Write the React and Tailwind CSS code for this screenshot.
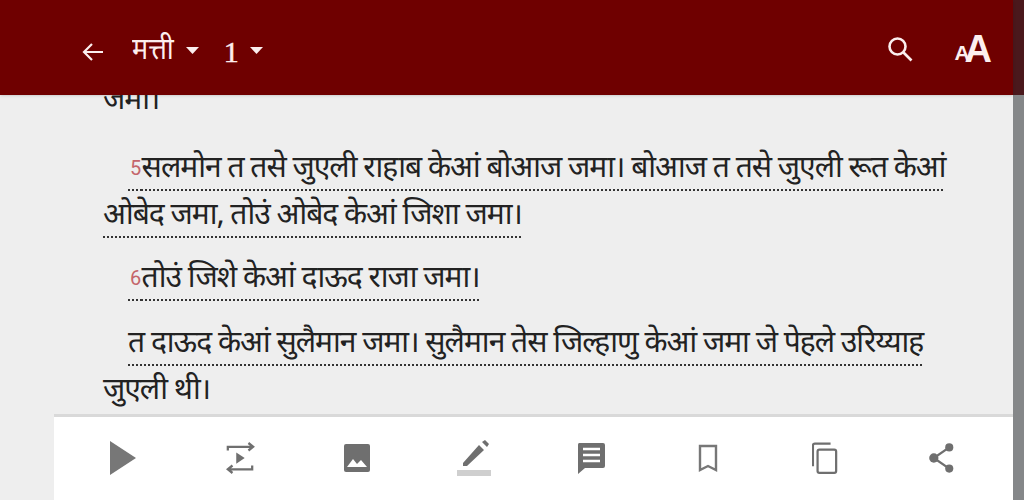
import React from "react";

const font = "font-['Noto_Sans_Devanagari','Lohit_Devanagari','FreeSans','Noto_Sans','Liberation_Sans',sans-serif]";
const U = ({ children }) => (
  <span className="underline decoration-dotted decoration-[#333] decoration-[1.5px] underline-offset-[12px]">{children}</span>
);
const Num = ({ children }) => (
  <span className="relative">
    <span className="absolute left-[2px] top-[6px] text-[20px] leading-[24px] indent-0 tracking-normal text-[#c4656b] font-['Roboto',sans-serif]">{children}</span>
    {"\u00a0\u00a0"}
  </span>
);
const Cell = ({ children }) => <div className="w-[117px] flex justify-center">{children}</div>;

export default function App() {
  return (
    <div className="w-[1024px] h-[500px] flex overflow-hidden bg-[#eeeeee]">
      <div className="w-[1013px] h-full flex flex-col">
        <header className="h-[95px] shrink-0 bg-[#6f0000] flex items-center pt-[8px] pl-[81px] pr-[21px] text-[#fdeeee] shadow z-10">
          <svg width="24" height="24" viewBox="0 0 24 24" fill="none" stroke="#fbeeee" strokeWidth="2.2"><path d="M22 12H3M11 4l-8 8 8 8" /></svg>
          <span className={`${font} text-[27px] ml-[27px] leading-none scale-y-110`}>मत्ती</span>
          <svg width="14" height="8" viewBox="0 0 14 8" className="ml-[12px] -mt-[2px]" fill="#fbeeee"><path d="M0 0h13L6.5 7z" /></svg>
          <span className="font-['Liberation_Serif',serif] text-[30px] ml-[24px] leading-none [-webkit-text-stroke:0.5px_#fdeeee]">1</span>
          <svg width="14" height="8" viewBox="0 0 14 8" className="ml-[11px] -mt-[2px]" fill="#fbeeee"><path d="M0 0h13L6.5 7z" /></svg>
          <div className="flex-1" />
          <svg width="26" height="26" viewBox="0 0 26 26" fill="none" stroke="#fbeeee" strokeWidth="2.6" className="mr-[41px] -mt-[5px]"><circle cx="10.5" cy="10.5" r="8" /><path d="M16.5 16.5l8 8" /></svg>
          <span className="font-['Liberation_Sans',sans-serif] font-bold leading-none flex items-end -mt-[6px]">
            <span className="text-[21px] -mr-[5px] leading-[22px]">A</span><span className="text-[38px] leading-[30px]">A</span>
          </span>
        </header>
        <main className={`${font} flex-1 min-h-0 overflow-hidden pl-[103px] pr-[66px] text-[30px] tracking-[-1px] leading-[47px] text-[#222]`}>
          <div className="-mt-[17px]">
            <p>जमा।</p>
            <p className="mt-[21px] indent-[25px]"><U><Num>5</Num>सलमोन त तसे जुएली राहाब केआं बोआज जमा। बोआज त तसे जुएली रूत केआं ओबेद जमा, तोउं ओबेद केआं जिशा जमा।</U></p>
            <p className="mt-[16px] indent-[25px]"><U><Num>6</Num>तोउं जिशे केआं दाऊद राजा जमा।</U></p>
            <p className="mt-[18px] indent-[25px]"><U>त दाऊद केआं सुलैमान जमा। सुलैमान तेस जिल्हाणु केआं जमा जे पेहले उरिय्याह</U> जुएली थी।</p>
          </div>
        </main>
        <div className="ml-[54px] h-[86px] shrink-0 bg-white border-t-[3px] border-[#d9d9d9] flex items-center pl-[10px] pb-[2px]">
          <Cell><svg width="30" height="34" viewBox="0 0 30 34" fill="#777"><path d="M2 0l26 17L2 34z" /></svg></Cell>
          <Cell>
            <svg width="30" height="36" viewBox="0 0 32 36" fill="none" stroke="#6f6f6f" strokeWidth="2.4"><path d="M3 10V6h26M25 2l5 4-5 4M29 26v4H4M8 26l-5 4 5 4" /><path d="M12 12l9 6-9 6z" fill="#6f6f6f" stroke="none" /></svg>
          </Cell>
          <Cell><svg width="26" height="30" viewBox="0 0 26 30" className="ml-[1px]"><rect width="26" height="28" y="1" rx="2" fill="#6f6f6f" /><path d="M3 24l6-8 4 5 4-4 6 7z" fill="#fff" /></svg></Cell>
          <Cell>
            <svg width="34" height="40" viewBox="0 0 34 40"><path d="M6 25L22 7l5 5L10 28H6zM25 4l3-2 4 4-2 3z" fill="#6f6f6f" /><rect y="32" width="34" height="6" fill="#cfcfcf" /></svg>
          </Cell>
          <Cell>
            <svg width="28" height="32" viewBox="0 0 28 32"><path d="M2 1h24a2 2 0 0 1 2 2v21a2 2 0 0 1-2 2H8l-7 6V3a2 2 0 0 1 1-2z" fill="#6f6f6f" /><path d="M6 7h17M6 13h17M6 19h17" stroke="#fff" strokeWidth="2.4" /></svg>
          </Cell>
          <Cell>
            <svg width="20" height="28" viewBox="0 0 20 28" fill="none" stroke="#777" strokeWidth="2.4"><path d="M2 2h16v24l-8-4-8 4z" /></svg>
          </Cell>
          <Cell>
            <svg width="26" height="34" viewBox="0 0 28 34" fill="none" stroke="#6f6f6f" strokeWidth="2.4"><path d="M20 1.5H3a2 2 0 0 0-2 2V26" /><rect x="6" y="8" width="20" height="25" rx="2" /></svg>
          </Cell>
          <Cell>
            <svg width="27" height="32" viewBox="0 0 28 32" className="ml-[2px]" fill="#6f6f6f"><circle cx="21" cy="5" r="4.2" /><circle cx="5" cy="16" r="4.8" /><circle cx="21" cy="27" r="4.2" /><path d="M21 5L5 16l16 11" fill="none" stroke="#6f6f6f" strokeWidth="2.4" /></svg>
          </Cell>
        </div>
      </div>
      <div className="w-[11px] h-full flex flex-col">
        <div className="h-[95px] bg-[#4a181c]" />
        <div className="flex-1 bg-[#858789]" />
      </div>
    </div>
  );
}
